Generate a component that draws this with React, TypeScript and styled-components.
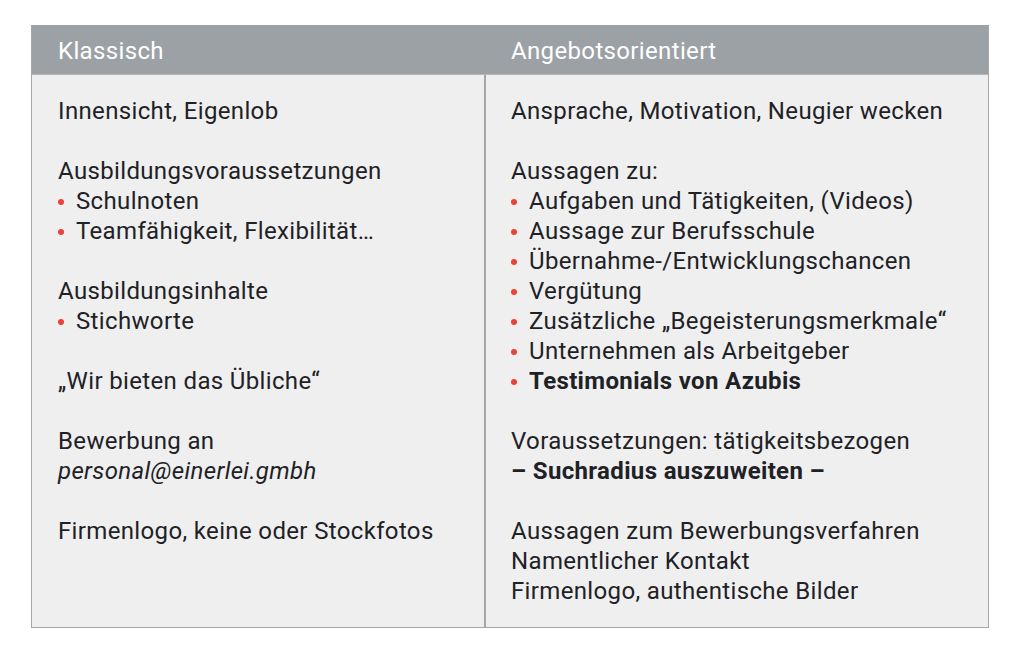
import React from 'react';
import styled, { createGlobalStyle } from 'styled-components';

const GlobalStyle = createGlobalStyle`
  html, body {
    margin: 0;
    padding: 0;
    background: #ffffff;
  }
  body {
    font-family: Roboto, "Liberation Sans", sans-serif;
  }
`;

type Line = { text: string; bullet?: boolean; bold?: boolean; italic?: boolean };
type Block = Line[];

const left: Block[] = [
  [{ text: 'Innensicht, Eigenlob' }],
  [
    { text: 'Ausbildungsvoraussetzungen' },
    { text: 'Schulnoten', bullet: true },
    { text: 'Teamfähigkeit, Flexibilität…', bullet: true },
  ],
  [{ text: 'Ausbildungsinhalte' }, { text: 'Stichworte', bullet: true }],
  [{ text: '„Wir bieten das Übliche“' }],
  [{ text: 'Bewerbung an' }, { text: 'personal@einerlei.gmbh', italic: true }],
  [{ text: 'Firmenlogo, keine oder Stockfotos' }],
];

const right: Block[] = [
  [{ text: 'Ansprache, Motivation, Neugier wecken' }],
  [
    { text: 'Aussagen zu:' },
    { text: 'Aufgaben und Tätigkeiten, (Videos)', bullet: true },
    { text: 'Aussage zur Berufsschule', bullet: true },
    { text: 'Übernahme-/Entwicklungschancen', bullet: true },
    { text: 'Vergütung', bullet: true },
    { text: 'Zusätzliche „Begeisterungsmerkmale“', bullet: true },
    { text: 'Unternehmen als Arbeitgeber', bullet: true },
    { text: 'Testimonials von Azubis', bullet: true, bold: true },
  ],
  [
    { text: 'Voraussetzungen: tätigkeitsbezogen' },
    { text: '– Suchradius auszuweiten –', bold: true },
  ],
  [
    { text: 'Aussagen zum Bewerbungsverfahren' },
    { text: 'Namentlicher Kontakt' },
    { text: 'Firmenlogo, authentische Bilder' },
  ],
];

const Column: React.FC<{ blocks: Block[] }> = ({ blocks }) => (
  <Cell>
    {blocks.map((block, i) => (
      <Paragraph key={i}>
        {block.map((line, j) => (
          <Row key={j} $bold={line.bold} $italic={line.italic}>
            {line.bullet && <Dot />}
            {line.text}
          </Row>
        ))}
      </Paragraph>
    ))}
  </Cell>
);

const App: React.FC = () => (
  <>
    <GlobalStyle />
    <Page>
      <Table>
        <HeadCell>Klassisch</HeadCell>
        <HeadCell $right>Angebotsorientiert</HeadCell>
        <Column blocks={left} />
        <Column blocks={right} />
      </Table>
    </Page>
  </>
);

export default App;

const Page = styled.div`
  width: 1023px;
  height: 662px;
  padding: 25px 0 0 31px;
  box-sizing: border-box;
`;

const Table = styled.div`
  width: 958px;
  box-sizing: border-box;
  display: grid;
  grid-template-columns: 452px 1fr;
  border: 1px solid #a3a7ab;
  border-top: none;
  background: #efefef;
  color: #1e2226;
  font-size: 24px;
  letter-spacing: 0.35px;
`;

const HeadCell = styled.div<{ $right?: boolean }>`
  height: 50px;
  display: flex;
  align-items: center;
  background: #9ca1a6;
  color: #ffffff;
  padding-left: ${(p) => (p.$right ? '27px' : '26px')};
  padding-top: 3px;
  box-sizing: border-box;
  border-bottom: 1px solid #b4b8bb;
`;

const Cell = styled.div`
  padding: 21px 0 21px 26px;
  & + & {
    border-left: 2px solid #a3a7ab;
    padding-left: 25px;
  }
`;

const Paragraph = styled.div`
  & + & {
    margin-top: 30px;
  }
`;

const Row = styled.div<{ $bold?: boolean; $italic?: boolean }>`
  height: 30px;
  line-height: 30px;
  display: flex;
  align-items: center;
  white-space: nowrap;
  font-weight: ${(p) => (p.$bold ? 700 : 400)};
  font-style: ${(p) => (p.$italic ? 'italic' : 'normal')};
`;

const Dot = styled.span`
  width: 6px;
  height: 6px;
  border-radius: 50%;
  background: #ea4138;
  margin: 2px 12px 0 0;
  flex: none;
`;
